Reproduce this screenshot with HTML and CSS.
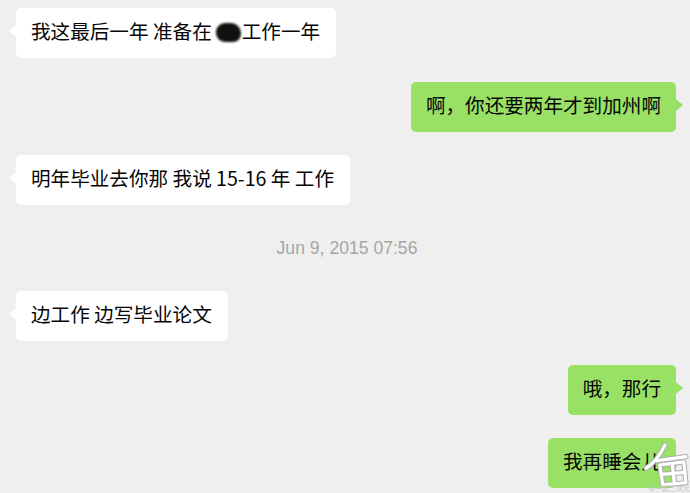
FILE: index.html
```html
<!DOCTYPE html>
<html lang="zh-CN">
<head>
<meta charset="utf-8">
<title>聊天记录</title>
<link rel="stylesheet" href="styles.css">
</head>
<body>
<main class="chat">
  <div class="row row-in">
    <div class="bubble bubble-in">我这最后一年 准备在<span class="redact"></span>工作一年</div>
  </div>
  <div class="row row-out">
    <div class="bubble bubble-out">啊，你还要两年才到加州啊</div>
  </div>
  <div class="row row-in">
    <div class="bubble bubble-in">明年毕业去你那 我说 15-16 年 工作</div>
  </div>
  <div class="time">Jun 9, 2015 07:56</div>
  <div class="row row-in">
    <div class="bubble bubble-in">边工作 边写毕业论文</div>
  </div>
  <div class="row row-out">
    <div class="bubble bubble-out">哦，那行</div>
  </div>
  <div class="row row-out">
    <div class="bubble bubble-out">我再睡会儿</div>
  </div>
</main>
<div class="mark">
  <svg width="48" height="44" viewBox="0 0 44 42" aria-hidden="true">
    <g fill="none" stroke-linecap="round" stroke-linejoin="round">
      <g stroke="#b0b0b0" stroke-width="5">
        <path d="M3 24 C10 20 16 12 21 2"/>
        <path d="M13 17 L41 13"/>
        <path d="M16 21 L19 40 L41 38 L39 18 Z"/>
        <path d="M18 30 L40 28 M28 20 L30 39"/>
      </g>
      <g stroke="#ffffff" stroke-width="3">
        <path d="M3 24 C10 20 16 12 21 2"/>
        <path d="M13 17 L41 13"/>
        <path d="M16 21 L19 40 L41 38 L39 18 Z"/>
        <path d="M18 30 L40 28 M28 20 L30 39"/>
      </g>
    </g>
  </svg>
  <span class="mark-text">@一起二次元</span>
</div>
</body>
</html>
```

FILE: styles.css
```css
html, body {
  margin: 0;
  padding: 0;
}

body {
  width: 690px;
  height: 493px;
  overflow: hidden;
  background: #efefef;
  font-family: "Noto Sans CJK SC", "Liberation Sans", sans-serif;
  position: relative;
}

.chat {
  display: flex;
  flex-direction: column;
  gap: 23.5px;
  padding: 8px 14px 0 16px;
}

.row {
  display: flex;
}

.row-in {
  justify-content: flex-start;
}

.row-out {
  justify-content: flex-end;
}

.bubble {
  position: relative;
  height: 50px;
  box-sizing: border-box;
  padding: 0 16px 0 15px;
  border-radius: 5px;
  font-size: 19.6px;
  line-height: 46px;
  color: #050505;
  white-space: nowrap;
}

.bubble-in {
  background: #ffffff;
}

.bubble-out {
  background: #98e165;
  padding: 0 15px 0 15px;
}

/* speech tails */
.bubble::before {
  content: "";
  position: absolute;
  top: 17px;
  width: 0;
  height: 0;
  border-top: 6px solid transparent;
  border-bottom: 6px solid transparent;
}

.bubble-in::before {
  left: -7px;
  border-right: 7px solid #ffffff;
}

.bubble-out::before {
  right: -7px;
  border-left: 7px solid #98e165;
}

.redact {
  display: inline-block;
  width: 25px;
  height: 19px;
  margin: 0 1px 0 4px;
  vertical-align: -3px;
  background: #111;
  border-radius: 9px 10px 8px 9px;
  filter: blur(1px);
}

.time {
  height: 39px;
  display: flex;
  align-items: center;
  justify-content: center;
  font-family: "Liberation Sans", sans-serif;
  font-size: 17.6px;
  color: #a6a6a6;
  padding-left: 2px;
}

.mark {
  position: absolute;
  right: 0;
  bottom: 1px;
  display: flex;
  flex-direction: column;
  align-items: flex-end;
}

.mark-text {
  font-size: 7px;
  line-height: 7px;
  color: #c2c2c2;
  white-space: nowrap;
  margin-top: -2px;
}
```
